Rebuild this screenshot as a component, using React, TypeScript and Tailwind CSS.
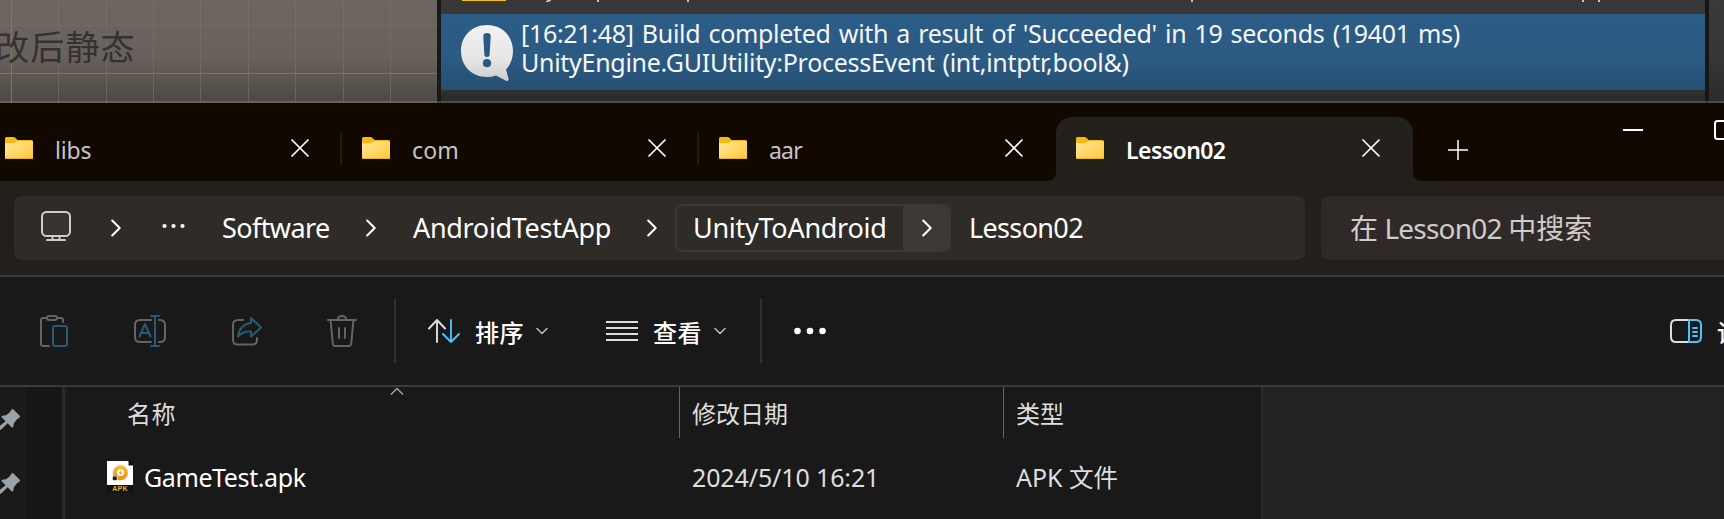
import React from "react";

const stroke = { fill: "none", strokeLinecap: "round", strokeLinejoin: "round" } as const;

function Folder() {
  return (
    <svg width="28" height="22" viewBox="0 0 28 22" className="block shrink-0">
      <defs>
        <linearGradient id="folderFront" x1="0" y1="0" x2="1" y2="1">
          <stop offset="0" stopColor="#ffe8a0" />
          <stop offset="1" stopColor="#ffc833" />
        </linearGradient>
      </defs>
      <path d="M0 1.5Q0 0 1.5 0H8.5Q9.6 0 10.3 .8L12.5 3H26.5Q28 3 28 4.500V12H0Z" fill="#fbb615" />
      <path d="M0 6H8.500Q9.800 6 10.800 5.200L12 4H26.500Q28 4 28 5.500V20.500Q28 22 26.500 22H1.500Q0 22 0 20.500Z" fill="url(#folderFront)" />
      <path d="M0.300 21.300H27.700" stroke="#f0ae1d" strokeWidth="1" />
    </svg>
  );
}

function Cross() {
  return (
    <svg width="18" height="18" viewBox="0 0 18 18" className="block">
      <path d="M1 1L17 17M17 1L1 17" stroke="#fff" strokeWidth="1.700" {...stroke} />
    </svg>
  );
}

function Tab({ title, tracking, active, divider }: { title: string; tracking: string; active?: boolean; divider?: boolean }) {
  return (
    <div className={`relative flex h-16 w-[357px] shrink-0 items-center pl-5 ${active ? "rounded-t-2xl bg-[#24201c]" : ""}`}>
      <div className="mb-[2px]"><Folder /></div>
      <span className={`ml-[22px] w-[235px] whitespace-nowrap pt-[2px] text-[23px] leading-[30px] ${tracking} ${active ? "font-semibold text-white" : "text-[#c6c4c2]"}`}>
        {title}
      </span>
      <div className="mb-[2px] ml-[0.5px]"><Cross /></div>
      {divider && <div className="ml-auto h-8 w-[2px] bg-[#231c14]" />}
      {active && (
        <>
          <svg width="8" height="8" className="absolute bottom-0 -left-2"><path d="M8 0V8H0A8 8 0 0 0 8 0Z" fill="#24201c" /></svg>
          <svg width="8" height="8" className="absolute -right-2 bottom-0"><path d="M0 0V8H8A8 8 0 0 1 0 0Z" fill="#24201c" /></svg>
        </>
      )}
    </div>
  );
}

function Chevron() {
  return (
    <svg width="10" height="18" viewBox="0 0 10 18" className="block shrink-0">
      <path d="M1.200 1.500L8.700 9L1.200 16.500" stroke="#fff" strokeWidth="2" {...stroke} />
    </svg>
  );
}

function Down() {
  return (
    <svg width="12" height="8" viewBox="0 0 12 8" className="block shrink-0">
      <path d="M1 1.500L6 6.500L11 1.500" stroke="#b9b9b9" strokeWidth="1.600" {...stroke} />
    </svg>
  );
}

function Pin() {
  return (
    <svg width="21" height="21" viewBox="0 0 21 21" className="block">
      <path d="M11.800 0.300Q12.700 -0.200 13.500 0.500L19.700 6.700Q20.600 7.700 19.600 8.500L17 10.300L13.800 14.400L13.300 17.600Q12.900 19.200 11.600 18.200L7.600 14.300L1 20.800H-2V18.500L5.600 12.300L1.700 8.300Q0.900 7 2.300 6.700L6 6.300L9.800 3.300Z" fill="#98a2a8" />
    </svg>
  );
}

function Background() {
  return (
    <div className="relative flex h-[103px] overflow-hidden">
      <div className="relative h-full w-[437px] overflow-hidden bg-linear-to-b from-[#6d655f] via-[#69615b] via-55% to-[#4d4843]">
        <svg width="437" height="103" className="absolute inset-0">
          <path d="M58.500 0V103M106.500 0V103M153.500 0V103M200.500 0V103M248.500 0V103M295.500 0V103M343.500 0V103M390.500 0V103M0 25.500H437" stroke="#77726d" strokeOpacity=".65" />
          <path d="M11.500 0V103M0 73.500H437" stroke="#7d7974" strokeOpacity=".9" />
        </svg>
        <div className="relative -ml-[5px] pt-[25px] font-['Noto_Sans_CJK_SC',sans-serif] text-[34px] leading-[42px] tracking-[1.2px] whitespace-nowrap text-[#333231]">
          改后静态
        </div>
      </div>
      <div className="w-1 bg-[#191919]" />
      <div className="flex w-[1264px] flex-col">
        <div className="h-[14px] bg-[#383838]">
          <svg width="1264" height="14" className="block">
            <path d="M21 0H65V1H21Z" fill="#f5bd0c" />
            <path d="M106 0H110V1H109L108 2H105V1H106ZM156 0H158V2H156ZM246 0H248V2H246ZM750 0H752V2H750ZM1141 0H1143V2H1141ZM1157 0H1159V2H1157Z" fill="#c4c4c4" />
          </svg>
        </div>
        <div className="flex h-[76px] bg-linear-to-b from-[#2c5d87] via-[#2b5a83] via-60% to-[#264f72]">
          <svg width="54" height="58" viewBox="0 0 54 58" className="mt-[10px] ml-[19px] block shrink-0">
            <defs>
              <linearGradient id="bubble" x1="0" y1="0" x2="0" y2="1">
                <stop offset="0" stopColor="#f2f2f2" />
                <stop offset=".6" stopColor="#e6e6e6" />
                <stop offset="1" stopColor="#cecece" />
              </linearGradient>
            </defs>
            <path d="M27 15M27 15M27 1C12 1 1 12 1 27S12 53 27 53Q32 53 36 51.500L46.500 57Q48.800 57.400 48.600 55L46 45.500C50.500 41 53 34 53 27C53 12 42 1 27 1Z" fill="url(#bubble)" />
            <path d="M23.300 12Q23.300 9 27 9T30.700 12L29.600 31Q29.400 33 27 33T24.400 31Z" fill="#2a5a83" />
            <circle cx="27" cy="39.200" r="4.100" fill="#2a5a83" />
          </svg>
          <div className="ml-[7px] pt-[5px] text-[25px] leading-[29px] whitespace-nowrap text-[#f6f6f6]">
            <div className="tracking-[-0.3px] [word-spacing:1.950px]">[16:21:48] Build completed with a result of 'Succeeded' in 19 seconds (19401 ms)</div>
            <div className="tracking-[-0.28px] [word-spacing:1.500px]">UnityEngine.GUIUtility:ProcessEvent (int,intptr,bool&amp;)</div>
          </div>
        </div>
        <div className="grow bg-linear-to-b from-[#303030] to-[#292929]" />
      </div>
      <div className="w-1 bg-[#171717]" />
      <div className="grow bg-linear-to-b from-[#393939] via-[#353535] via-60% to-[#2b2b2b]" />
      <div className="absolute inset-x-0 bottom-0 h-[2px] bg-[#858585]/40" />
    </div>
  );
}

function TabBar() {
  return (
    <div className="relative flex h-[78px] items-end overflow-hidden bg-[#110900]">
      <div className="-ml-[15px] flex shrink-0">
        <Tab title="libs" tracking="tracking-[-0.2px]" divider />
        <Tab title="com" tracking="tracking-[0.1px]" divider />
        <Tab title="aar" tracking="tracking-[-0.8px]" />
        <Tab title="Lesson02" tracking="tracking-[-0.55px]" active />
      </div>
      <svg width="20" height="20" className="mb-[21px] ml-[35px] block shrink-0">
        <path d="M10 0V20M0 10H20" stroke="#fff" strokeWidth="1.500" />
      </svg>
      <svg width="20" height="2" className="mb-[50px] ml-[155px] block shrink-0"><path d="M0 1H20" stroke="#fff" strokeWidth="2" /></svg>
      <svg width="20" height="20" className="mb-[41px] ml-[71px] block shrink-0"><rect x="1" y="1" width="18" height="18" rx="2.500" fill="none" stroke="#fff" strokeWidth="2" /></svg>
    </div>
  );
}

function AddressRow() {
  return (
    <div className="flex h-[94px] items-center overflow-hidden bg-linear-to-r from-[#23201b] to-[#241f1b] pl-[14px]">
      <div className="flex h-16 w-[1291px] shrink-0 items-center rounded-lg bg-[#2f2c28] pl-[27px] text-[27px] leading-9 whitespace-nowrap text-white">
        <svg width="31" height="34" viewBox="0 0 31 34" className="block shrink-0">
          <rect x="1" y="1" width="28" height="24" rx="4.500" fill="#44423f" fillOpacity=".35" stroke="#cfcdcb" strokeWidth="2" />
          <path d="M11.500 26V29M18.500 26V29M6 29H24" stroke="#cfcdcb" strokeWidth="2" {...stroke} />
        </svg>
        <div className="ml-[39px]"><Chevron /></div>
        <svg width="24" height="6" className="mb-1 ml-[41px] block shrink-0">
          <circle cx="2.500" cy="3" r="2.100" fill="#fff" /><circle cx="11.500" cy="3" r="2.100" fill="#fff" /><circle cx="20.500" cy="3" r="2.100" fill="#fff" />
        </svg>
        <span className="ml-[36px] w-[144px] shrink-0 pb-[1px] tracking-[-0.6px]">Software</span>
        <Chevron />
        <span className="ml-[37px] w-[234px] shrink-0 pb-[1px] tracking-[-0.32px]">AndroidTestApp</span>
        <Chevron />
        <div className="ml-[18px] flex h-12 w-[276px] shrink-0 overflow-hidden rounded-lg border-2 border-[#3b3835] bg-[#2f2b27]">
          <span className="w-[226px] shrink-0 pt-[4px] pl-[16px] tracking-[-0.28px]">UnityToAndroid</span>
          <div className="flex grow items-center justify-center bg-[#3c3834] pl-[2px]"><Chevron /></div>
        </div>
        <span className="ml-[18px] pb-[1px] tracking-[-0.65px]">Lesson02</span>
      </div>
      <div className="ml-4 flex h-16 w-[480px] shrink-0 items-center rounded-lg bg-[#2f2a27] pl-[29px] text-[28px] leading-9 tracking-[-0.8px] whitespace-nowrap text-[#cfccca]">
        <span>
          <span className="tracking-normal">在</span> Lesson02 <span className="tracking-normal">中搜索</span>
        </span>
      </div>
    </div>
  );
}

function Toolbar() {
  const gray = "#646464";
  const blue = "#2a5a73";
  return (
    <div className="flex h-[112px] items-center overflow-hidden border-y-2 border-[#3a3a3a] bg-[#191919] pl-10 font-['Noto_Sans_CJK_SC',sans-serif] text-2xl leading-8 whitespace-nowrap text-white">
      <svg width="28" height="32" viewBox="0 0 28 32" className="block shrink-0">
        <path d="M7 3H3Q1 3 1 5V29Q1 31 3 31H9M17 3H21Q23 3 23 5V7" stroke={gray} strokeWidth="2" {...stroke} />
        <rect x="7" y="1" width="10" height="4" rx="2" stroke={gray} strokeWidth="2" fill="none" />
        <rect x="13" y="11" width="14" height="20" rx="2" stroke={blue} strokeWidth="2" fill="none" />
      </svg>
      <svg width="32" height="32" viewBox="0 0 32 32" className="ml-[66px] block shrink-0">
        <path d="M17 5H6Q1 5 1 10V22Q1 27 6 27H17M25 5H26Q31 5 31 10V22Q31 27 26 27H25" stroke={gray} strokeWidth="2" {...stroke} />
        <path d="M21 1V31M17 1H25M17 31H25M5.500 21.500L11 9L16.500 21.500M7.500 18H14.500" stroke={blue} strokeWidth="2" {...stroke} />
      </svg>
      <svg width="30" height="30" viewBox="0 0 30 30" className="ml-[66px] block shrink-0">
        <path d="M11 4H6Q1 4 1 9V24Q1 28.500 6 28.500H20Q25 28.500 25 24V22" stroke={gray} strokeWidth="2" {...stroke} />
        <path d="M19 2L29 11.500L19 20.500V15.500Q10.500 15 6 20.500Q7.500 8.500 19 7Z" stroke={blue} strokeWidth="2" {...stroke} />
      </svg>
      <svg width="30" height="32" viewBox="0 0 30 32" className="ml-[65px] block shrink-0">
        <path d="M1 5H29M10.500 5Q11 1 15 1T19.500 5M3.500 5L5.800 28.500Q6 31 8.500 31H21.500Q24 31 24.200 28.500L26.500 5M12 13V23M18 13V23" stroke={gray} strokeWidth="2" {...stroke} />
      </svg>
      <div className="ml-[37px] h-16 w-[2px] shrink-0 bg-[#313131]" />
      <svg width="32" height="24" viewBox="0 0 32 24" className="ml-8 block shrink-0">
        <path d="M9 23V1M1 9.500L9 1L17 9.500" stroke="#dedede" strokeWidth="1.900" {...stroke} />
        <path d="M23 1V23M15 15L23 23L31 15" stroke="#4cc2ff" strokeWidth="1.900" {...stroke} />
      </svg>
      <span className="ml-[15px] w-[61px] shrink-0 pt-[2px] font-medium tracking-[0.5px]">排序</span>
      <Down />
      <svg width="32" height="20" className="ml-[58px] block shrink-0">
        <path d="M0 1H32M0 7H32M0 13H32M0 19H32" stroke="#dedede" strokeWidth="2" />
      </svg>
      <span className="ml-[15px] w-[61px] shrink-0 pt-[2px] font-medium tracking-[0.5px]">查看</span>
      <Down />
      <div className="ml-[34px] h-16 w-[2px] shrink-0 bg-[#313131]" />
      <svg width="32" height="8" className="ml-8 block shrink-0">
        <circle cx="3.500" cy="4" r="3.300" fill="#fff" /><circle cx="16" cy="4" r="3.300" fill="#fff" /><circle cx="28.500" cy="4" r="3.300" fill="#fff" />
      </svg>
      <svg width="32" height="24" viewBox="0 0 32 24" className="ml-[844px] block shrink-0">
        <path d="M19 1H6Q1 1 1 6V18Q1 23 6 23H19" stroke="#dedede" strokeWidth="2" {...stroke} />
        <path d="M19 1H26Q31 1 31 6V18Q31 23 26 23H19ZM23 9H27M23 13H27M23 17H27" stroke="#4cc2ff" strokeWidth="2" {...stroke} />
      </svg>
      <span className="ml-[15px] shrink-0 pt-[2px] font-medium">详细信息</span>
    </div>
  );
}

function ApkIcon() {
  return (
    <div className="flex h-8 w-[26px] shrink-0 flex-col bg-[#111]">
      <svg width="26" height="24" viewBox="0 0 26 24" className="block">
        <defs>
          <linearGradient id="apkRing" x1="0" y1="0" x2="0" y2="1">
            <stop offset="0" stopColor="#f3c623" />
            <stop offset="1" stopColor="#ef8a1d" />
          </linearGradient>
        </defs>
        <path d="M0 0H21.500V4.500H26V24H0Z" fill="#fff" />
        <path d="M13.500 4.200A7.500 7.500 0 0 1 13.500 19.200H10.500V15H6V11.700A7.500 7.500 0 0 1 13.500 4.200Z" fill="url(#apkRing)" />
        <circle cx="13.500" cy="11.700" r="3.400" fill="#fff" />
        <path d="M14.200 8.800L11.500 12.200H13.200L12.700 14.600L15.500 11.200H13.800Z" fill="#f0a01f" />
        <path d="M5.800 15.400H9.800V19.200H5.800Z" fill="#222" />
      </svg>
      <span className="text-center font-['Liberation_Sans',sans-serif] text-[7px] leading-[8px] font-bold tracking-[0.3px] text-[#e8b41c]">APK</span>
    </div>
  );
}

function Content() {
  return (
    <div className="flex h-[132px] overflow-hidden bg-[#191919] text-[25px] whitespace-nowrap text-[#dedede]">
      <div className="flex w-[26px] flex-col gap-[43px] bg-[#1a1a1a] pt-[22px]">
        <Pin />
        <Pin />
      </div>
      <div className="w-9 bg-[#161616]" />
      <div className="w-[3px] bg-[#2a2a2a]" />
      <div className="w-[3px] bg-[#1d1d1d]" />
      <div className="flex w-[1193px] flex-col">
        <div className="flex h-[51px] font-['Noto_Sans_CJK_SC',sans-serif] text-2xl leading-[52px]">
          <div className="relative w-[611px] pl-[59px] tracking-[0.5px]">
            名称
            <svg width="14" height="8" className="absolute top-0 left-[322px]"><path d="M1 7.500L7 1.500L13 7.500" stroke="#a8a8a8" strokeWidth="1.300" fill="none" /></svg>
          </div>
          <div className="w-[324px] border-l border-[#636363] pl-3">修改日期</div>
          <div className="border-l border-[#636363] pl-3">类型</div>
        </div>
        <div className="flex h-[78px] items-center">
          <div className="flex w-[624px] items-center pl-[39px]">
            <ApkIcon />
            <span className="ml-[11px] pt-[2px] tracking-[-0.4px] text-white">GameTest.apk</span>
          </div>
          <span className="w-[324px] pt-[2px] tracking-[-0.12px]">2024/5/10 16:21</span>
          <span className="pt-[2px]">APK <span className="text-[24.500px]">文件</span></span>
        </div>
      </div>
      <div className="w-[2px] bg-[#2b2b2b]" />
      <div className="grow bg-[#222222]" />
    </div>
  );
}

export default function App() {
  return (
    <div className="h-[519px] w-[1724px] overflow-hidden bg-[#191919] font-['Noto_Sans','Noto_Sans_CJK_SC',sans-serif]">
      <Background />
      <TabBar />
      <AddressRow />
      <Toolbar />
      <Content />
    </div>
  );
}
